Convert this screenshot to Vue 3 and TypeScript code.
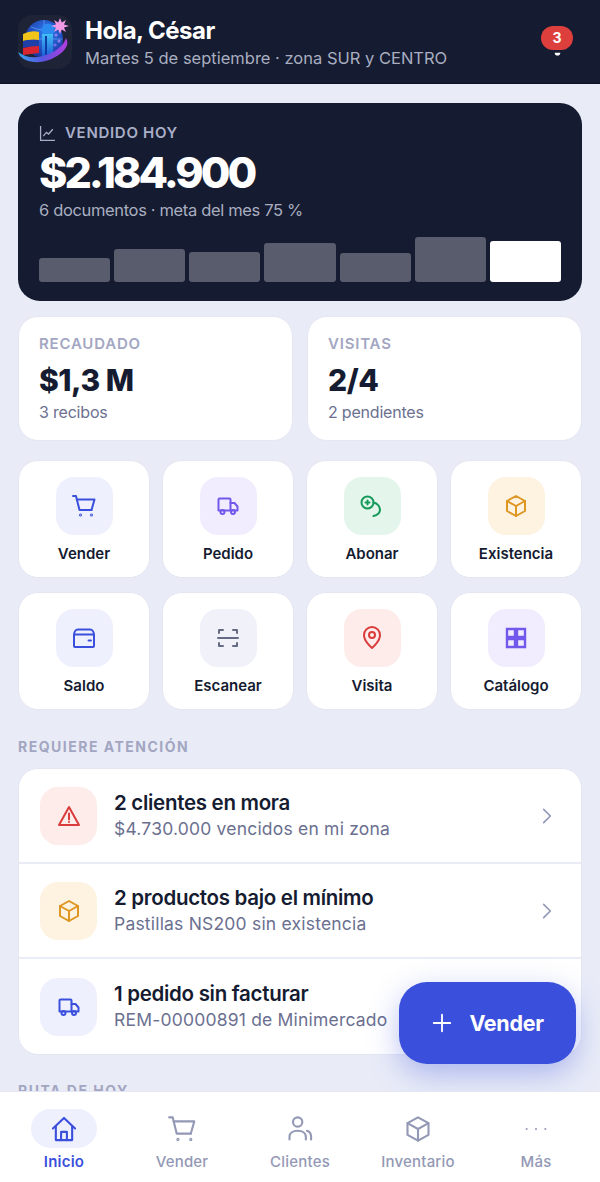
<template>
  <div class="screen">
    <header class="topbar">
      <svg class="logo" viewBox="0 0 54 54">
        <defs>
          <radialGradient id="globe" cx="0.55" cy="0.35" r="0.7">
            <stop offset="0" stop-color="#2f7df0" />
            <stop offset="1" stop-color="#1a2f9c" />
          </radialGradient>
          <linearGradient id="ring" x1="0" x2="1" y1="0" y2="0">
            <stop offset="0" stop-color="#35a4ef" />
            <stop offset="0.5" stop-color="#5a55e0" />
            <stop offset="1" stop-color="#b23de0" />
          </linearGradient>
          <linearGradient id="tower" x1="0" x2="0" y1="0" y2="1">
            <stop offset="0" stop-color="#43c0f5" />
            <stop offset="1" stop-color="#1c5fd8" />
          </linearGradient>
        </defs>
        <rect width="54" height="54" rx="14" fill="#1e2336" />
        <circle cx="26" cy="24" r="19" fill="url(#globe)" />
        <path d="M13 12q13 6 26 0M8 24h36M26 5v38" fill="none" stroke="#5c9cf2" stroke-width="0.8" />
        <path d="M5 19q8-4 16-2v8q-8-1-16 1z" fill="#f0c419" />
        <path d="M5 26q8-2 16-1v6q-8 0-16 2z" fill="#1e3fa8" />
        <path d="M5 33q8-2 16-2v7q-8 1-16 2z" fill="#d8252f" />
        <circle cx="30" cy="15" r="6.500" fill="#2c8bf0" />
        <path d="M24 19h11v22H24z" fill="url(#tower)" />
        <path d="M28 21v19" stroke="#0e3da8" stroke-width="2" />
        <circle cx="38" cy="20" r="1.600" fill="#8a82f0" />
        <circle cx="41" cy="26" r="1.600" fill="#8a82f0" />
        <circle cx="37" cy="30" r="1.600" fill="#6f74ee" />
        <path d="M0 37q11 8 25 4 19-6 23-18 5 9-9 18-11 7-23 6Q3 46 0 37z" fill="url(#ring)" />
        <path d="M42 3l1.800 4.500L48 5l-2 4.500 5 1.500-5 1.500 2 4.500-4.200-2.500L42 19l-1.800-4.500L36 17l2-4.500-5-1.500 5-1.500L36 5l4.200 2.500z" fill="#f19ae6" />
      </svg>
      <div class="greeting">
        <h1>Hola, César</h1>
        <p>Martes 5 de septiembre · zona SUR y CENTRO</p>
      </div>
      <div class="bell">
        <span class="badge">3</span>
        <svg class="clapper" viewBox="0 0 10 5"><path d="M1 .6h8A4 4 0 0 1 1 .6z" /></svg>
      </div>
    </header>

    <main class="content">
      <section class="hero">
        <div class="hero-label">
          <svg class="chart-icon" viewBox="0 0 16 16">
            <path d="M1.500 1v13.500H15M4 10.500l3-3.500 2 1.500L13 4" />
          </svg>
          VENDIDO HOY
        </div>
        <div class="hero-amount">$2.184.900</div>
        <div class="hero-sub">6 documentos · meta del mes 75 %</div>
        <div class="bars">
          <span
            v-for="(b, i) in bars"
            :key="i"
            class="bar"
            :class="{ current: i === bars.length - 1 }"
            :style="{ height: b + 'px' }"
          ></span>
        </div>
      </section>

      <section class="stats">
        <div v-for="s in stats" :key="s.label" class="stat">
          <div class="stat-label">{{ s.label }}</div>
          <div class="stat-value">{{ s.value }}</div>
          <div class="stat-sub">{{ s.sub }}</div>
        </div>
      </section>

      <section class="actions">
        <div v-for="a in actions" :key="a.label" class="action">
          <span class="icon-box" :class="a.tone">
            <svg class="icon" :class="{ thick: a.icon === 'grid' }" viewBox="0 0 24 24">
              <path v-for="d in icons[a.icon]" :key="d" :d="d" />
            </svg>
          </span>
          <span class="action-label">{{ a.label }}</span>
        </div>
      </section>

      <h2 class="section-title">REQUIERE ATENCIÓN</h2>
      <section class="alerts">
        <div v-for="r in alerts" :key="r.title" class="alert">
          <span class="icon-box" :class="r.tone">
            <svg class="icon" viewBox="0 0 24 24">
              <path v-for="d in icons[r.icon]" :key="d" :d="d" />
            </svg>
          </span>
          <div class="alert-text">
            <div class="alert-title">{{ r.title }}</div>
            <div class="alert-sub">{{ r.sub }}</div>
          </div>
          <svg class="chevron" viewBox="0 0 24 24"><path d="M8 4l8 8-8 8" /></svg>
        </div>
      </section>

      <h2 class="section-title route">RUTA DE HOY</h2>
    </main>

    <button class="fab">
      <svg viewBox="0 0 24 24"><path d="M12 3v18M3 12h18" /></svg>
      Vender
    </button>

    <nav class="tabbar">
      <div v-for="t in tabs" :key="t.label" class="tab" :class="{ active: t.active }">
        <span class="tab-icon">
          <svg viewBox="0 0 24 24">
            <path v-for="d in icons[t.icon]" :key="d" :d="d" />
          </svg>
        </span>
        <span>{{ t.label }}</span>
      </div>
    </nav>
  </div>
</template>

<script setup lang="ts">
const bars = [24, 33, 30, 39, 29, 45, 41]

const stats = [
  { label: 'RECAUDADO', value: '$1,3 M', sub: '3 recibos' },
  { label: 'VISITAS', value: '2/4', sub: '2 pendientes' }
]

const icons: Record<string, string[]> = {
  cart: [
    'M1 2h3l3.500 14h12',
    'M4.800 5.500H22.500L19.500 16',
    'M9 21a.5.5 0 1 1-1 0 .5.5 0 0 1 1 0z',
    'M20 21a.5.5 0 1 1-1 0 .5.5 0 0 1 1 0z'
  ],
  truck: [
    'M2.500 5.500a1 1 0 0 1 1-1h10a1 1 0 0 1 1 1v11h-12z',
    'M14.500 9h4l3 3.500v4h-7',
    'M8.500 18a2 2 0 1 1-4 0 2 2 0 0 1 4 0z',
    'M19 18a2 2 0 1 1-4 0 2 2 0 0 1 4 0z'
  ],
  coin: [
    'M13.500 8.500a6 6 0 1 1-12 0 6 6 0 0 1 12 0z',
    'M7.500 6.500v4M5.500 8.500h4',
    'M13.500 8.500q3 .5 5 3 3 4.500 0 8-2 2-5 2.500'
  ],
  box: ['M12 2l9 5v10l-9 5-9-5V7z', 'M3 7l9 5 9-5', 'M12 12v10'],
  wallet: [
    'M2 9.500a1 1 0 0 1 1-1h18a1 1 0 0 1 1 1V20a1 1 0 0 1-1 1H3a1 1 0 0 1-1-1z',
    'M2 9.500c0-3 1.500-6 4-6h12c2.500 0 4 3 4 6',
    'M16.500 14.500h2.500'
  ],
  scan: [
    'M3 7V4h4M17 4h4v3M3 17v3h4M17 20h4v-3',
    'M2 12h20'
  ],
  pin: [
    'M12 22s8-6.500 8-13a8 8 0 1 0-16 0c0 6.500 8 13 8 13z',
    'M15 9a3 3 0 1 1-6 0 3 3 0 0 1 6 0z'
  ],
  grid: [
    'M3 3h8v8H3z',
    'M13 3h8v8h-8z',
    'M3 13h8v8H3z',
    'M13 13h8v8h-8z'
  ],
  alert: ['M12 3L2 21h20z', 'M12 9.500v6', 'M12 18v.01'],
  home: [
    'M2.500 11.500L12 2.500l9.500 9',
    'M5 9.500V21.500h14V9.500',
    'M9.500 21.500v-7h5v7'
  ],
  users: [
    'M14 6a4 4 0 1 1-8 0 4 4 0 0 1 8 0z',
    'M3 21v-2.500C3 15.500 6 13.500 10 13.500s7 2 7 5V21',
    'M18 13.500c2 .7 3.500 2.500 3.500 5V21'
  ],
  more: ['M4 12h.01', 'M12 12h.01', 'M20 12h.01']
}

const actions = [
  { label: 'Vender', icon: 'cart', tone: 'blue' },
  { label: 'Pedido', icon: 'truck', tone: 'violet' },
  { label: 'Abonar', icon: 'coin', tone: 'green' },
  { label: 'Existencia', icon: 'box', tone: 'amber' },
  { label: 'Saldo', icon: 'wallet', tone: 'blue' },
  { label: 'Escanear', icon: 'scan', tone: 'grey' },
  { label: 'Visita', icon: 'pin', tone: 'red' },
  { label: 'Catálogo', icon: 'grid', tone: 'violet' }
]

const alerts = [
  { title: '2 clientes en mora', sub: '$4.730.000 vencidos en mi zona', icon: 'alert', tone: 'red' },
  { title: '2 productos bajo el mínimo', sub: 'Pastillas NS200 sin existencia', icon: 'box', tone: 'amber' },
  { title: '1 pedido sin facturar', sub: 'REM-00000891 de Minimercado', icon: 'truck', tone: 'blue' }
]

const tabs = [
  { label: 'Inicio', icon: 'home', active: true },
  { label: 'Vender', icon: 'cart', active: false },
  { label: 'Clientes', icon: 'users', active: false },
  { label: 'Inventario', icon: 'box', active: false },
  { label: 'Más', icon: 'more', active: false }
]
</script>

<style>
html,
body {
  margin: 0;
  background: #e9ecf7;
}
</style>

<style scoped>
.screen {
  position: relative;
  display: flex;
  flex-direction: column;
  width: 600px;
  height: 1182px;
  overflow: hidden;
  background: #e9ecf7;
  font-family: Inter, "Noto Sans", sans-serif;
  color: #151b30;
}

.topbar {
  display: flex;
  align-items: center;
  flex-shrink: 0;
  gap: 13px;
  height: 84px;
  box-sizing: border-box;
  padding: 0 27px 0 18px;
  background: #151b30;
  border-bottom: 1px solid #0d1122;
}

.logo {
  width: 54px;
  height: 54px;
  flex-shrink: 0;
}

.greeting {
  flex: 1;
  padding-top: 2px;
}

.greeting h1 {
  margin: 0;
  font-size: 24px;
  line-height: 30px;
  font-weight: 700;
  letter-spacing: -0.5px;
  color: #fff;
}

.greeting p {
  margin: 0;
  font-size: 16.500px;
  line-height: 24px;
  color: #a9aec0;
}

.bell {
  display: flex;
  flex-direction: column;
  align-items: center;
  gap: 2px;
  margin-bottom: 1px;
}

.badge {
  width: 32px;
  height: 24px;
  border-radius: 12px;
  background: #dd3f3c;
  color: #fff;
  font-size: 14px;
  font-weight: 700;
  line-height: 24px;
  text-align: center;
}

.clapper {
  width: 7px;
  height: 4px;
  fill: #fff;
}

.content {
  flex: 1;
  min-height: 0;
  overflow: hidden;
  padding: 19px 18px 0;
}

.hero {
  height: 198px;
  box-sizing: border-box;
  padding: 20px 21px 19px;
  border-radius: 22px;
  background: #151b30;
  color: #fff;
  display: flex;
  flex-direction: column;
}

.hero-label {
  display: flex;
  align-items: center;
  gap: 9px;
  font-size: 15px;
  line-height: 20px;
  font-weight: 600;
  letter-spacing: 0.7px;
  color: #a9aec8;
}

.chart-icon {
  width: 17px;
  height: 17px;
  fill: none;
  stroke: #a9aec8;
  stroke-width: 1.2;
}

.hero-amount {
  font-size: 43px;
  line-height: 52px;
  font-weight: 800;
  letter-spacing: -3px;
  margin-top: 3px;
}

.hero-sub {
  font-size: 16.500px;
  line-height: 24px;
  letter-spacing: -0.350px;
  color: #a9aec0;
}

.bars {
  display: flex;
  align-items: flex-end;
  gap: 4px;
  margin-top: auto;
}

.bar {
  flex: 1;
  border-radius: 3px;
  background: #585c6c;
}

.bar.current {
  background: #fff;
}

.stats {
  display: grid;
  grid-template-columns: 1fr 1fr;
  gap: 14px;
  margin-top: 15px;
}

.stat {
  height: 125px;
  box-sizing: border-box;
  padding: 17px 20px;
  border-radius: 20px;
  background: #fff;
  border: 1px solid #e4e7f3;
}

.stat-label {
  font-size: 15px;
  line-height: 20px;
  font-weight: 600;
  letter-spacing: 0.8px;
  color: #a3a6c2;
}

.stat-value {
  font-size: 30px;
  line-height: 40px;
  font-weight: 800;
  letter-spacing: -0.5px;
  margin-top: 6px;
}

.stat-sub {
  font-size: 16px;
  line-height: 22px;
  letter-spacing: -0.2px;
  color: #6b7090;
  margin-top: 1px;
}

.actions {
  display: grid;
  grid-template-columns: repeat(4, 1fr);
  gap: 14px 12px;
  margin-top: 19px;
}

.action {
  display: flex;
  flex-direction: column;
  align-items: center;
  height: 118px;
  box-sizing: border-box;
  padding-top: 16px;
  border-radius: 20px;
  background: #fff;
  border: 1px solid #e4e7f3;
}

.action-label {
  margin-top: 8px;
  font-size: 15px;
  line-height: 22px;
  font-weight: 600;
}

.icon-box {
  display: flex;
  align-items: center;
  justify-content: center;
  width: 57px;
  height: 58px;
  flex-shrink: 0;
  border-radius: 18px;
}

.icon {
  width: 24px;
  height: 24px;
  fill: none;
  stroke: currentColor;
  stroke-width: 2;
  stroke-linecap: round;
  stroke-linejoin: round;
}

.icon.thick {
  stroke-linecap: butt;
  stroke-linejoin: miter;
  stroke-width: 2.400;
}

.blue {
  background: #eef0fd;
  color: #3a50dc;
}

.violet {
  background: #f1edfe;
  color: #7358ec;
}

.green {
  background: #e4f6ec;
  color: #159a5a;
}

.amber {
  background: #fef2e0;
  color: #dd9722;
}

.grey {
  background: #f0f1f9;
  color: #666b85;
}

.red {
  background: #fdecea;
  color: #d93c3a;
}

.section-title {
  margin: 27px 0 11px;
  font-size: 14px;
  line-height: 20px;
  font-weight: 700;
  letter-spacing: 1.500px;
  color: #a3a6c2;
}

.section-title.route {
  margin-top: 26px;
}

.alerts {
  border-radius: 20px;
  background: #fff;
  border: 1px solid #e4e7f3;
  overflow: hidden;
}

.alert {
  display: flex;
  align-items: center;
  gap: 17px;
  height: 95px;
  box-sizing: border-box;
  padding: 0 24px 0 21px;
  border-bottom: 2px solid #e9ecf7;
}

.alert:last-child {
  border-bottom: none;
}

.alert-text {
  flex: 1;
  min-width: 0;
  padding-bottom: 1px;
  white-space: nowrap;
}

.alert-title {
  font-size: 20.500px;
  line-height: 28px;
  font-weight: 600;
  letter-spacing: -0.300px;
}

.alert-sub {
  font-size: 17.500px;
  line-height: 24px;
  letter-spacing: 0.2px;
  color: #6b7090;
}

.chevron {
  width: 20px;
  height: 20px;
  fill: none;
  stroke: #9398b5;
  stroke-width: 2;
  stroke-linecap: round;
  stroke-linejoin: round;
}

.fab {
  position: absolute;
  left: 399px;
  top: 982px;
  display: flex;
  align-items: center;
  justify-content: center;
  gap: 16px;
  width: 177px;
  height: 82px;
  border: none;
  border-radius: 28px;
  background: #3a50dc;
  color: #fff;
  font-family: inherit;
  font-size: 21.500px;
  font-weight: 700;
  letter-spacing: -0.3px;
  box-shadow: 0 10px 30px rgba(58, 80, 220, 0.35);
}

.fab svg {
  width: 22px;
  height: 22px;
  fill: none;
  stroke: #fff;
  stroke-width: 2;
  stroke-linecap: round;
}

.tabbar {
  position: relative;
  display: flex;
  flex-shrink: 0;
  justify-content: center;
  height: 91px;
  box-sizing: border-box;
  padding-top: 17px;
  background: #fff;
  border-top: 1px solid #e4e7f3;
}

.tab {
  display: flex;
  flex-direction: column;
  align-items: center;
  width: 118px;
  gap: 3px;
  font-size: 15px;
  line-height: 22px;
  letter-spacing: 0.2px;
  color: #9398b5;
  font-weight: 500;
}

.tab-icon {
  display: flex;
  align-items: center;
  justify-content: center;
  width: 66px;
  height: 39px;
  border-radius: 20px;
}

.tab-icon svg {
  width: 28px;
  height: 28px;
  fill: none;
  stroke: currentColor;
  stroke-width: 1.800;
  stroke-linecap: round;
  stroke-linejoin: round;
}

.tab.active {
  color: #3a50dc;
  font-weight: 600;
}

.tab.active .tab-icon {
  background: #eef0fd;
}
</style>
